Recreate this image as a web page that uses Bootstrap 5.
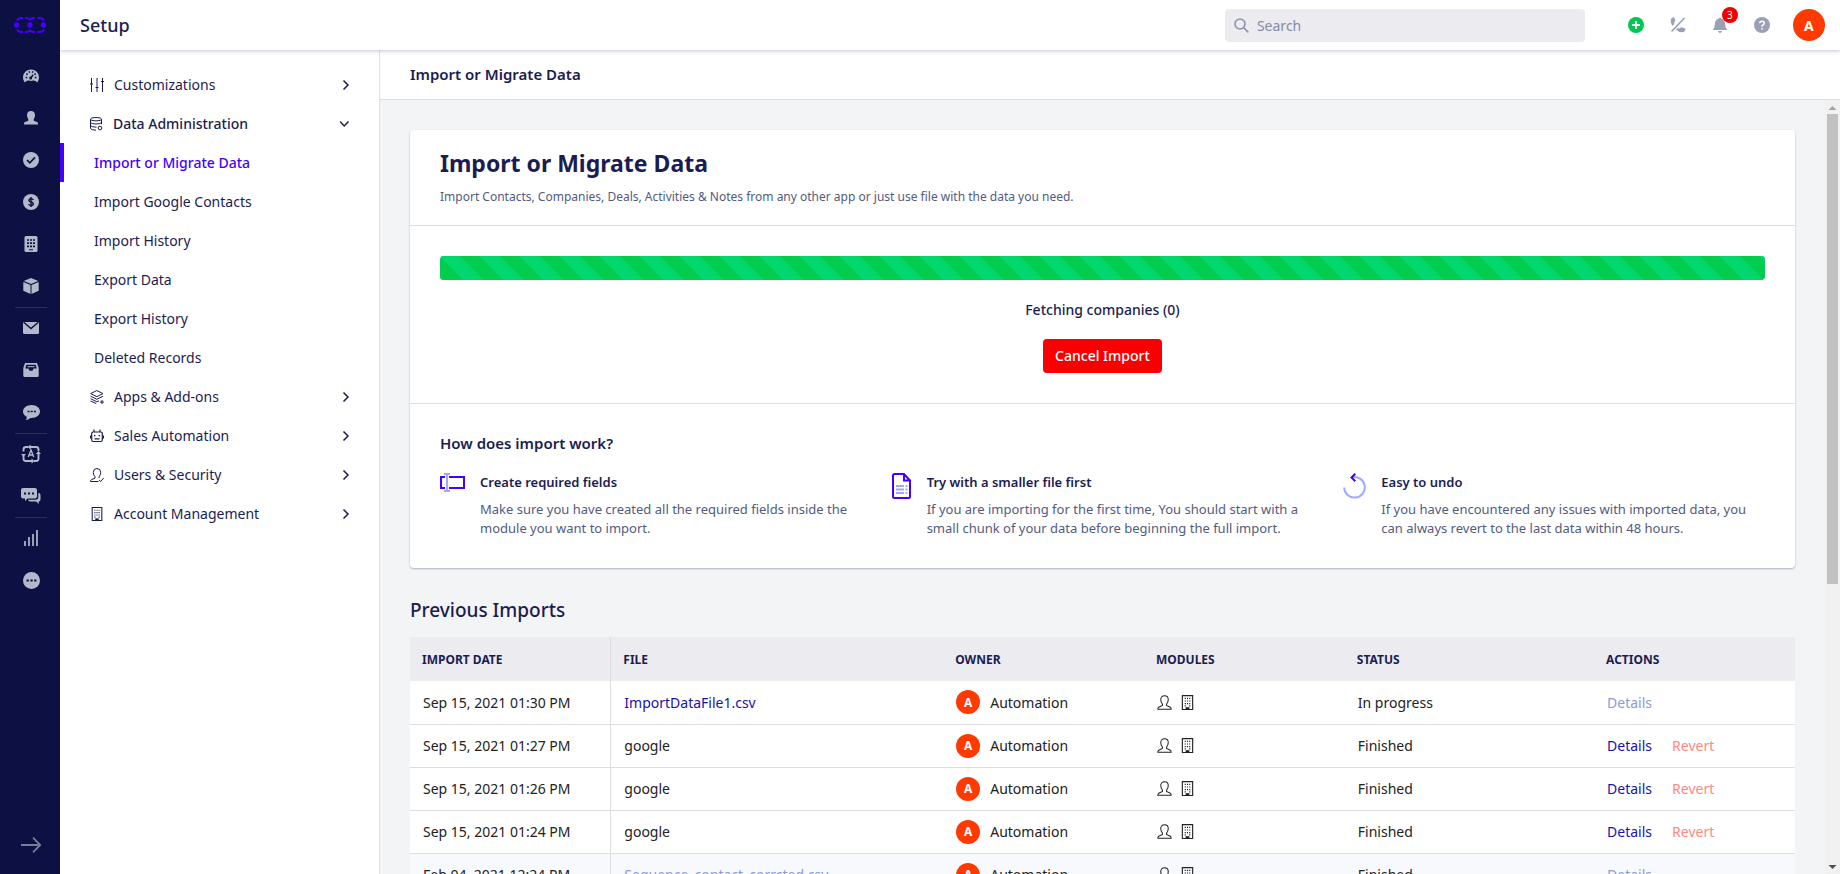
<!DOCTYPE html>
<html lang="en">
<head>
<meta charset="utf-8">
<meta name="viewport" content="width=device-width, initial-scale=1">
<title>Setup - Import or Migrate Data</title>
<link href="https://cdn.jsdelivr.net/npm/bootstrap@5.3.0/dist/css/bootstrap.min.css" rel="stylesheet">
<style>
:root { --navy:#0d1042; --ink:#1b1d50; --soft:#525b80; --brand:#4600ff; --rule:#dcdde3; --grey:#9ba1b5; }
body { font-family:"Noto Sans","Open Sans",sans-serif; font-size:14px; line-height:19px; color:var(--ink); }
a { text-decoration:none; }
svg { display:block; flex:none; }
.fw-medium { font-weight:500; }
.rail { width:60px; background:var(--navy); flex:none; }
.rail-logo { height:55px; padding:17px 0 0 14px; }
.rail-link { height:42px; display:flex; align-items:center; justify-content:center; padding-left:2px; color:#b3b8cb; position:relative; }
.rail-link.ruled::before { content:""; position:absolute; top:0; left:15px; right:13px; height:1px; background:#2a2f5e; }
.rail-toggle { height:58px; color:#777d98; }
.topbar { height:50px; padding-left:20px; padding-right:15px; box-shadow:0 1px 4px rgba(20,22,80,.25); position:relative; z-index:2; }
.topbar h1 { font-size:18px; line-height:24px; }
.search-box { width:360px; height:33px; margin-right:40px; background:#ebebf0; border-radius:4px; padding:0 9px; color:#8d90ad; }
.search-box input { background:none; border:0; outline:0; box-shadow:none; padding:0; color:var(--soft); font-size:14px; }
.search-box input::placeholder { color:#858aa6; }
.tool-list { gap:20px; }
.tool { border:0; background:none; padding:0; color:var(--grey); position:relative; width:22px; }
.tool svg { margin:auto; }
.tool-count { position:absolute; top:-10px; left:13px; width:16px; height:16px; border-radius:50%; background:#f40000; color:#fff; font-size:10px; line-height:16px; text-align:center; }
.avatar { border-radius:50%; background:#ff3a00; color:#fff; display:inline-flex; align-items:center; justify-content:center; font-weight:700; border:0; padding:0; flex:none; }
.avatar-lg { width:32px; height:32px; font-size:14px; }
.avatar-sm { width:24px; height:24px; font-size:12px; }
.setup-menu { width:320px; flex:none; border-right:1px solid #dfdfe4; padding-top:15px; }
.menu-row { height:39px; display:flex; align-items:center; padding:0 27px 0 30px; color:var(--ink); gap:10px; }
.menu-row .label { flex:1; }
.menu-sub { padding-left:30px; border-left:4px solid transparent; }
.menu-sub.active { border-left-color:var(--brand); color:var(--brand); font-weight:500; }
.subhead { height:50px; padding:0 30px; border-bottom:1px solid var(--rule); }
.subhead h2 { font-size:15px; line-height:20px; margin:0 0 2px; font-weight:600; }
.scroll-pane { background:#f3f4f6; min-height:0; }
.pane-body { padding:30px; overflow:hidden; }
.panel { background:#fff; border-radius:4px; box-shadow:0 1px 2px rgba(20,22,80,.3); margin-bottom:28px; }
.panel section { padding:30px; }
.panel section + section { border-top:1px solid var(--rule); }
.panel .intro { padding:16px 30px 19px; }
.intro h3 { font-size:23px; line-height:34px; font-weight:700; margin:0 0 8px; }
.intro p { font-size:12px; line-height:18px; color:var(--soft); margin:0; }
.progress { height:24px; border-radius:4px; }
.progress-bar { background-color:#00cd50; background-image:linear-gradient(45deg,#00d76c 25%,transparent 25%,transparent 50%,#00d76c 50%,#00d76c 75%,transparent 75%,transparent); background-size:40px 40px; }
.btn-cancel { background:#f90000; color:#fff; font-size:14px; line-height:20px; padding:7px 12px; border:0; border-radius:4px; font-weight:500; }
.how h4 { font-size:15px; line-height:20px; margin:0 0 20px; font-weight:600; }
.panel .how { padding:29px 30px 30px; }
.how-grid { display:grid; grid-template-columns:repeat(3,1fr); gap:30px; }
.how-grid > div { gap:15px; }
.how-grid h5 { font-size:13px; line-height:18px; margin:0 0 9px; font-weight:600; }
.how-grid p { margin:0; color:var(--soft); white-space:nowrap; font-size:13px; }
.prev-title { font-size:19px; line-height:28px; margin:0 0 13px; }
.imports { width:100%; table-layout:fixed; border-collapse:collapse; color:#222; background:#fff; }
.imports th { height:44px; background:#ebebf0; font-size:12px; font-weight:700; padding:0 12px; color:var(--ink); }
.imports td { height:43px; padding:0 13px; border-bottom:1px solid var(--rule); white-space:nowrap; }
.imports th:first-child, .imports td:first-child { border-right:1px solid var(--rule); }
.imports a { color:#1713a8; }
.imports a.faded { color:#8a9bdb; }
.imports a.revert { color:#ff8882; margin-left:20px; }
.imports tr.older td { background:#f8f9fd; }
.owner { gap:10px; }
.scroll-track { width:15px; background:#f1f1f1; flex:none; color:#a3a3a3; }
.scroll-thumb { width:11px; height:63%; background:#c1c1c1; }
</style>
</head>
<body>
<svg width="0" height="0" class="position-absolute">
  <symbol id="i-person" viewBox="0 0 16 16"><path d="M5.800 9.800C4.500 8.400 4 6.800 4 4.900 4 2.300 5.600.8 8 .8s4 1.500 4 4.100c0 1.900-.5 3.500-1.800 4.900v1.400l4 1.900c.7.4.9 1 .9 2H.9c0-1 .2-1.600.9-2l4-1.900z" fill="none" stroke="currentColor" stroke-width="1.100"/></symbol>
  <symbol id="i-building" viewBox="0 0 16 16"><path d="M2.500.6h11v14.900h-11z" fill="none" stroke="currentColor" stroke-width="1.200"/><path d="M6 13h4v2.500H6z" fill="currentColor"/><path d="M5 3.700h1.200M7.400 3.700h1.200M9.800 3.700H11M5 6.400h1.200M7.400 6.400h1.200M9.800 6.400H11M5 9.100h1.200M7.400 9.100h1.200M9.800 9.100H11M5 11.600h1.200M9.800 11.600H11" stroke="currentColor" stroke-width="1.300"/></symbol>
  <symbol id="i-right" viewBox="0 0 12 12"><path d="M3.500 1.500 8 6l-4.500 4.500" fill="none" stroke="currentColor" stroke-width="1.500"/></symbol>
</svg>
<div class="d-flex vh-100 overflow-hidden">
  <nav class="rail d-flex flex-column" aria-label="Main">
    <a class="rail-logo" href="#" aria-label="Home"><svg width="33" height="16" viewBox="0 0 33 16" fill="none" stroke="#4600ff" stroke-width="1.900"><path d="M3 3.800Q4.500 1 7 1h2M11 1.200q3-.8 5 1.500 2-2.300 5-1.500M23.500 1h2.500q2.500 0 4 2.800M3 12.200Q4.500 15 7 15h2M11 14.800q3 .8 5-1.500 2 2.300 5 1.500M23.500 15h2.500q2.500 0 4-2.800"/><g fill="#4600ff" stroke="none"><circle cx="2.700" cy="8" r="2.700"/><circle cx="16" cy="8" r="2.700"/><circle cx="29.500" cy="8" r="2.700"/></g></svg></a>
    <a class="rail-link" href="#" aria-label="Dashboard"><svg width="16" height="16" viewBox="0 0 16 16"><path d="M1.800 14.500A8 8 0 1 1 14.200 14.500Q12.500 12.300 10 12.600L8 13l-2-.4Q3.500 12.300 1.800 14.500z" fill="currentColor"/><path d="M2.500 9.500h1.700M11.800 9.500h1.700M3.300 5.700l1.400.9M6 3.200l.6 1.500M10 3.200l-.6 1.500M12.700 5.700l-1.400.9M7.200 10.500l3-3.700" stroke="#0d1042" stroke-width="1.400"/><circle cx="7.700" cy="10" r="1.500" fill="#0d1042"/></svg></a>
    <a class="rail-link" href="#" aria-label="Contacts"><svg width="14" height="14" viewBox="0 0 14 14" fill="currentColor"><path d="M4.300 8.500Q3 6.500 3 4c0-2.700 1.600-4 4-4s4 1.300 4 4q0 2.500-1.300 4.500v1.300l3.300 1.300c.8.400 1 1 1 2.400H0c0-1.400.2-2 1-2.400l3.300-1.300z"/></svg></a>
    <a class="rail-link" href="#" aria-label="Activities"><svg width="16" height="16" viewBox="0 0 16 16"><circle cx="8" cy="8" r="8" fill="currentColor"/><path d="m4 8 2.800 2.800L12 5.300" fill="none" stroke="#0d1042" stroke-width="1.700"/></svg></a>
    <a class="rail-link" href="#" aria-label="Deals"><svg width="16" height="16" viewBox="0 0 16 16"><circle cx="8" cy="8" r="8" fill="currentColor"/><path d="M10.300 5.900Q9.800 4.700 8 4.700T5.800 6.300Q5.800 7.600 8 8t2.300 1.700q0 1.600-2.200 1.600T5.700 10M8 3v10" fill="none" stroke="#0d1042" stroke-width="1.400"/></svg></a>
    <a class="rail-link" href="#" aria-label="Companies"><svg width="14" height="16" viewBox="0 0 14 16"><rect x=".5" width="13" height="16" rx="1.500" fill="currentColor"/><path d="M3 4h2M6 4h2M9 4h2M3 7.200h2M6 7.200h2M9 7.200h2M3 10.400h2M6 10.400h2M9 10.400h2" stroke="#0d1042" stroke-width="1.700"/><path d="M5 13.800h4" stroke="#0d1042"/></svg></a>
    <a class="rail-link" href="#" aria-label="Products"><svg width="16" height="16" viewBox="0 0 16 16"><path d="m8 0 7.300 3L8 6 .7 3zM.3 4l7.200 3v9L.3 12.800zM15.700 4 8.500 7v9l7.200-3.200z" fill="currentColor"/></svg></a>
    <a class="rail-link ruled" href="#" aria-label="Mail"><svg width="16" height="12" viewBox="0 0 16 12"><rect width="16" height="12" rx="1.500" fill="currentColor"/><path d="m1 .5 7 6 7-6" fill="none" stroke="#0d1042" stroke-width="1.400"/></svg></a>
    <a class="rail-link" href="#" aria-label="Inbox"><svg width="16" height="14" viewBox="0 0 16 14"><path d="M2 0h12l1.700 5v7.500Q15.700 14 14.500 14h-13Q.3 14 .3 12.500V5z" fill="currentColor"/><path d="M3.300 1.800h9.400l1 3.700h-3L9.500 7.800h-3L5.300 5.500h-3z" fill="#0d1042"/><path d="M4.500 3.700h7" stroke="currentColor"/></svg></a>
    <a class="rail-link" href="#" aria-label="Chats"><svg width="17" height="15" viewBox="0 0 17 15"><path d="M8.500 0C13.200 0 17 2.900 17 6.500S13.200 13 8.500 13H7.400Q5.500 15 2.500 15q1.600-1.500 1.200-3.300Q0 9.800 0 6.500C0 2.900 3.800 0 8.500 0z" fill="currentColor"/><path d="M4.500 6.500h2M7.700 6.500h2M10.900 6.500h2" stroke="#0d1042" stroke-width="1.700"/></svg></a>
    <a class="rail-link ruled" href="#" aria-label="Automations"><svg width="20" height="20" viewBox="0 0 20 20" fill="none" stroke="currentColor" stroke-width="1.900"><path d="M2.500 7.500V5.500Q2.500 3 5 3h2M9 3h6q2.500 0 2.500 2.500V7M17.500 9v5.500Q17.500 17 15 17h-2M11 17H5q-2.500 0-2.500-2.500V12"/><path d="M9.500.5 6.500 3l3 2.500zM14.800 10l2.700-3 2.500 3zM10.500 14.500l3 2.500-3 2.500zM0 10l2.500 3L5 10z" fill="currentColor" stroke="none"/><path d="m7.300 13 2.700-7 2.700 7M8.200 11h3.600" stroke-width="1.400"/></svg></a>
    <a class="rail-link" href="#" aria-label="Messages"><svg width="20" height="16" viewBox="0 0 20 16"><path d="M2 0h12q2 0 2 2v6.500q0 2-2 2H6.500L4 13v-2.500H2q-2 0-2-2V2Q0 0 2 0zM17.300 5q2.200.2 2.200 2v4.500q0 1.800-1.800 2V16l-2.500-2.500h-6q-1.800 0-2.200-1.700h7.500q2.800 0 2.800-2.800z" fill="currentColor"/><path d="M3 5.500h2M7 5.500h2M11 5.500h2" stroke="#0d1042" stroke-width="2"/></svg></a>
    <a class="rail-link ruled" href="#" aria-label="Reports"><svg width="14" height="16" viewBox="0 0 14 16" stroke="currentColor" stroke-width="1.700"><path d="M1 16v-5M5 16V7M9 16V4M13 16V0"/></svg></a>
    <a class="rail-link" href="#" aria-label="More"><svg width="17" height="17" viewBox="0 0 17 17"><circle cx="8.500" cy="8.500" r="8.500" fill="currentColor"/><path d="M3.500 8.500h2.300M7.400 8.500h2.300M11.200 8.500h2.300" stroke="#0d1042" stroke-width="2"/></svg></a>
    <a class="rail-link rail-toggle mt-auto" href="#" aria-label="Expand"><svg width="20" height="16" viewBox="0 0 20 16" fill="none" stroke="currentColor" stroke-width="1.800"><path d="M0 8h19M12 .7 19.200 8 12 15.300"/></svg></a>
  </nav>

  <div class="d-flex flex-column flex-grow-1 overflow-hidden">
    <header class="topbar bg-white d-flex align-items-center flex-shrink-0">
      <h1 class="fw-medium mb-0 me-auto">Setup</h1>
      <label class="search-box d-flex align-items-center gap-2">
        <svg width="15" height="15" viewBox="0 0 15 15" fill="none" stroke="currentColor" stroke-width="1.600"><circle cx="6" cy="6" r="5"/><path d="m9.700 9.700 4.700 4.700"/></svg>
        <input type="search" class="form-control" placeholder="Search" aria-label="Search">
      </label>
      <div class="d-flex align-items-center tool-list">
        <button class="tool" aria-label="Add"><svg width="16" height="16" viewBox="0 0 16 16"><circle cx="8" cy="8" r="8" fill="#00c853"/><path d="M8 4v8M4 8h8" stroke="#fff" stroke-width="1.800"/></svg></button>
        <button class="tool" aria-label="Calls"><svg width="16" height="16" viewBox="0 0 16 16"><path d="M2.500.5Q.3 1.500.8 4.500q.3 2.500 1.700 4.500l1.900-2-.4-1.500L5.300 4Q5.300 1.500 4 .5zM6 12.500l1.800-1.700L9 11.800l2-1.600q2 .2 4.500 1.500-.2 3.300-3.500 3.500-3.500 0-6-2.700z" fill="currentColor"/><path d="M14.500 1 1.500 14.500" stroke="currentColor" stroke-width="1.700"/></svg></button>
        <button class="tool" aria-label="Notifications"><svg width="16" height="16" viewBox="0 0 16 16"><path d="M6.800 1.500a1.300 1.300 0 0 1 2.500 0Q12.800 2.500 13 6.500q0 4 2.300 6.500H.8Q3 10.500 3 6.500q.2-4 3.800-5zM6 14h4q-.5 2-2 2t-2-2z" fill="currentColor"/></svg><span class="tool-count">3</span></button>
        <button class="tool" aria-label="Help"><svg width="16" height="16" viewBox="0 0 16 16"><circle cx="8" cy="8" r="8" fill="currentColor"/><path d="M5.700 6.300Q5.800 4.200 8 4.200t2.300 1.900Q10.300 7.200 9 8t-1 1.700M8 11v1.600" fill="none" stroke="#fff" stroke-width="1.500"/></svg></button>
        <button class="avatar avatar-lg" aria-label="Profile">A</button>
      </div>
    </header>

    <div class="d-flex flex-grow-1 overflow-hidden">
      <nav class="setup-menu" aria-label="Setup">
        <a class="menu-row" href="#"><svg width="14" height="14" viewBox="0 0 14 14" stroke="currentColor"><path d="M1.500 0v14M7 0v14M12.500 0v14M0 6h3M5.500 9.500h3M11 3.500h3"/></svg><span class="label">Customizations</span><svg width="12" height="12"><use href="#i-right"/></svg></a>
        <a class="menu-row fw-medium" href="#"><svg width="13" height="14" viewBox="0 0 13 14" fill="none" stroke="currentColor"><ellipse cx="6" cy="2.200" rx="5.500" ry="1.700"/><path d="M.5 2.200v9.300q.5 1.500 5.500 1.700M11.500 2.200v5M.5 5.300Q1 7 6 7t5.500-1.700M.5 8.500Q1 10 6.500 10.200"/><circle cx="10" cy="11" r="1.800"/></svg><span class="label">Data Administration</span><svg width="12" height="12" viewBox="2 0 12 12"><path d="M2 3.500 6.200 8l4.300-4.500" fill="none" stroke="currentColor" stroke-width="1.500"/></svg></a>
        <a class="menu-row menu-sub active" href="#">Import or Migrate Data</a>
        <a class="menu-row menu-sub" href="#">Import Google Contacts</a>
        <a class="menu-row menu-sub" href="#">Import History</a>
        <a class="menu-row menu-sub" href="#">Export Data</a>
        <a class="menu-row menu-sub" href="#">Export History</a>
        <a class="menu-row menu-sub" href="#">Deleted Records</a>
        <a class="menu-row" href="#"><svg width="14" height="14" viewBox="0 0 14 14" fill="none" stroke="currentColor"><path d="M6.800.6 13 3.600 6.800 6.700.6 3.600zM.6 6.200l6.200 3.100L13 6.200M.6 8.700l6.200 3.100 2.200-1M.6 11l5.700 2.600M12 10v4M10 12h4"/></svg><span class="label">Apps &amp; Add-ons</span><svg width="12" height="12"><use href="#i-right"/></svg></a>
        <a class="menu-row" href="#"><svg width="14" height="14" viewBox="0 0 14 14" fill="none" stroke="currentColor" stroke-width="1.200"><rect x="1.700" y="3" width="10.600" height="9.500" rx="1.500"/><path d="M4 .5V3M10 .5V3M.5 6.500v3M13.500 6.500v3M4.500 9.800h5M4 6.700h1.500M8.500 6.700H10"/></svg><span class="label">Sales Automation</span><svg width="12" height="12"><use href="#i-right"/></svg></a>
        <a class="menu-row" href="#"><svg width="14" height="14" viewBox="0 0 14 14" fill="none" stroke="currentColor"><path d="M8.500 13.500H.5q0-1.500 1-2l3.500-1.300V8.700Q3.300 7 3.300 4.500 3.300.5 7 .5t3.700 4Q10.700 7 9 8.700V10M9 12l1.700 1.500 3-3.500"/></svg><span class="label">Users &amp; Security</span><svg width="12" height="12"><use href="#i-right"/></svg></a>
        <a class="menu-row" href="#"><svg width="14" height="14"><use href="#i-building"/></svg><span class="label">Account Management</span><svg width="12" height="12"><use href="#i-right"/></svg></a>
      </nav>

      <main class="d-flex flex-column flex-grow-1 overflow-hidden">
        <div class="subhead d-flex align-items-center bg-white flex-shrink-0"><h2>Import or Migrate Data</h2></div>
        <div class="scroll-pane d-flex flex-grow-1 overflow-hidden">
          <div class="pane-body flex-grow-1">
            <div class="panel">
              <section class="intro">
                <h3>Import or Migrate Data</h3>
                <p>Import Contacts, Companies, Deals, Activities &amp; Notes from any other app or just use file with the data you need.</p>
              </section>
              <section class="text-center">
                <div class="progress" role="progressbar" aria-label="Import progress" aria-valuenow="100" aria-valuemin="0" aria-valuemax="100"><div class="progress-bar progress-bar-striped w-100"></div></div>
                <div class="fw-medium my-3 py-1">Fetching companies (0)</div>
                <button class="btn btn-cancel">Cancel Import</button>
              </section>
              <section class="how">
                <h4>How does import work?</h4>
                <div class="how-grid">
                  <div class="d-flex">
                    <svg width="25" height="19" viewBox="0 0 25 19" fill="none" stroke-width="2"><path d="M5 4H1v11h4M9 4h15v11H9" stroke="#4600ff"/><path d="M7 1v17M4 1h6M4 18h6" stroke="#a0a9ff"/></svg>
                    <div><h5>Create required fields</h5><p>Make sure you have created all the required fields inside the<br>module you want to import.</p></div>
                  </div>
                  <div class="d-flex">
                    <svg width="20" height="26" viewBox="0 0 20 26" fill="none" stroke-width="2"><path d="M12 1H2.500Q1 1 1 2.500v21Q1 25 2.500 25h14q1.500 0 1.500-1.500V7.500L12 1v6.500h6" stroke="#4600ff"/><path d="M4 13h8M13.500 13h2M4 16.500h8M13.500 16.500h2M4 20h8M13.500 20h2" stroke="#a0a9ff"/></svg>
                    <div><h5>Try with a smaller file first</h5><p>If you are importing for the first time, You should start with a<br>small chunk of your data before beginning the full import.</p></div>
                  </div>
                  <div class="d-flex">
                    <svg width="23" height="26" viewBox="0 0 23 26" fill="none" stroke-width="2"><path d="M9 4.300A10.300 10.300 0 1 1 1.200 14.500" stroke="#a0a9ff"/><path d="M12.300.8 8.500 4.500l3.800 3.700" stroke="#4600ff"/></svg>
                    <div><h5>Easy to undo</h5><p>If you have encountered any issues with imported data, you<br>can always revert to the last data within 48 hours.</p></div>
                  </div>
                </div>
              </section>
            </div>

            <h3 class="prev-title fw-medium">Previous Imports</h3>
            <table class="imports">
              <colgroup><col style="width:14.5%"><col style="width:24%"><col style="width:14.5%"><col style="width:14.5%"><col style="width:18%"><col style="width:14.5%"></colgroup>
              <thead><tr><th>IMPORT DATE</th><th>FILE</th><th>OWNER</th><th>MODULES</th><th>STATUS</th><th>ACTIONS</th></tr></thead>
              <tbody>
                <tr><td>Sep 15, 2021 01:30 PM</td><td><a href="#">ImportDataFile1.csv</a></td><td><div class="d-flex align-items-center owner"><span class="avatar avatar-sm">A</span><span>Automation</span></div></td><td><div class="d-flex gap-2"><svg width="15" height="15"><use href="#i-person"/></svg><svg width="15" height="15"><use href="#i-building"/></svg></div></td><td>In progress</td><td><a class="faded" href="#">Details</a></td></tr>
                <tr><td>Sep 15, 2021 01:27 PM</td><td>google</td><td><div class="d-flex align-items-center owner"><span class="avatar avatar-sm">A</span><span>Automation</span></div></td><td><div class="d-flex gap-2"><svg width="15" height="15"><use href="#i-person"/></svg><svg width="15" height="15"><use href="#i-building"/></svg></div></td><td>Finished</td><td><a href="#">Details</a><a class="revert" href="#">Revert</a></td></tr>
                <tr><td>Sep 15, 2021 01:26 PM</td><td>google</td><td><div class="d-flex align-items-center owner"><span class="avatar avatar-sm">A</span><span>Automation</span></div></td><td><div class="d-flex gap-2"><svg width="15" height="15"><use href="#i-person"/></svg><svg width="15" height="15"><use href="#i-building"/></svg></div></td><td>Finished</td><td><a href="#">Details</a><a class="revert" href="#">Revert</a></td></tr>
                <tr><td>Sep 15, 2021 01:24 PM</td><td>google</td><td><div class="d-flex align-items-center owner"><span class="avatar avatar-sm">A</span><span>Automation</span></div></td><td><div class="d-flex gap-2"><svg width="15" height="15"><use href="#i-person"/></svg><svg width="15" height="15"><use href="#i-building"/></svg></div></td><td>Finished</td><td><a href="#">Details</a><a class="revert" href="#">Revert</a></td></tr>
                <tr class="older"><td>Feb 04, 2021 12:24 PM</td><td><a class="faded" href="#">Sequence_contact_corrcted.csv</a></td><td><div class="d-flex align-items-center owner"><span class="avatar avatar-sm">A</span><span>Automation</span></div></td><td><div class="d-flex gap-2"><svg width="15" height="15"><use href="#i-person"/></svg><svg width="15" height="15"><use href="#i-building"/></svg></div></td><td>Finished</td><td><a class="faded" href="#">Details</a></td></tr>
              </tbody>
            </table>
          </div>
          <div class="scroll-track d-flex flex-column align-items-center" aria-hidden="true">
            <svg width="15" height="14" viewBox="0 0 15 14"><path d="M3.500 10h8l-4-4z" fill="#a3a3a3"/></svg>
            <div class="flex-grow-1"><div class="scroll-thumb"></div></div>
            <svg width="15" height="14" viewBox="0 0 15 14"><path d="M3.500 5h8l-4 4z" fill="#505050"/></svg>
          </div>
        </div>
      </main>
    </div>
  </div>
</div>
<script src="https://cdn.jsdelivr.net/npm/bootstrap@5.3.0/dist/js/bootstrap.bundle.min.js"></script>
</body>
</html>
